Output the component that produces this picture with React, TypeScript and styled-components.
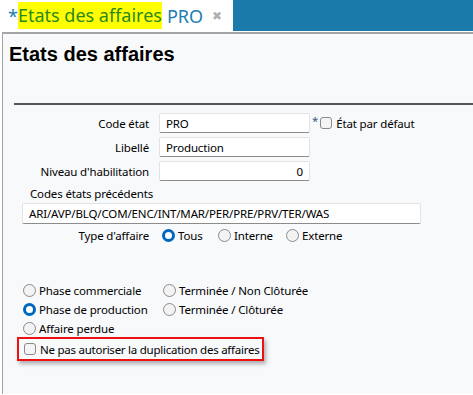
import styled, { createGlobalStyle } from "styled-components"

const GlobalStyle = createGlobalStyle`
  html, body {
    margin: 0;
    padding: 0;
    background: #ffffff;
  }
  body {
    font-family: "Noto Sans", "Open Sans", sans-serif;
    font-size: 11.5px;
    letter-spacing: -0.15px;
    color: #000000;
  }
`

const TabBar = styled.div`
  display: flex;
  height: 31px;
  background: #ffffff;
  border-bottom: 1px solid #ffffff;
`

const Tab = styled.div`
  display: flex;
  align-items: center;
  width: 233px;
  padding-left: 8px;
  box-sizing: border-box;
  font-size: 18px;
  letter-spacing: 0;
  color: #1d7db2;
`

const Highlight = styled.span`
  background: #ffff00;
  color: #2b8a1e;
  padding: 1px 0 2px;
`

const TabName = styled.span`
  margin-left: 5px;
`

const CloseMark = styled.span`
  margin-left: 9px;
  color: #b0b0b0;
  font-family: "DejaVu Sans", sans-serif;
  font-size: 12px;
  font-weight: bold;
`

const TabFill = styled.div`
  flex: 1;
  background: #1a7bab;
`

const Panel = styled.div`
  margin-left: 2px;
  height: 362px;
  border-top: 2px solid #a4a4a4;
  border-left: 1px solid #a4a4a4;
  background: #f8f9fb;
  box-sizing: border-box;
`

const Title = styled.h1`
  margin: 0;
  padding: 9px 0 0 6px;
  font-family: "Liberation Sans", Arial, sans-serif;
  font-size: 20px;
  font-weight: bold;
  letter-spacing: 0;
  line-height: 22px;
`

const Rule = styled.div`
  margin: 38px 0 0 11px;
  height: 2px;
  background: #565656;
`

const Form = styled.div`
  padding: 8px 0 0 16px;
`

const FieldGrid = styled.div`
  display: grid;
  grid-template-columns: 130px 151px auto;
  column-gap: 10px;
  row-gap: 4px;
  align-items: center;
`

const Label = styled.div`
  text-align: right;
  white-space: nowrap;
`

const Box = styled.div<{ $align?: string }>`
  height: 20px;
  box-sizing: border-box;
  padding: 0 6px;
  display: flex;
  align-items: center;
  justify-content: ${(p) => (p.$align === "right" ? "flex-end" : "flex-start")};
  background: #ffffff;
  border: 1px solid #e3e3e3;
  border-bottom-color: #8c8c8c;
  border-radius: 2px;
  white-space: nowrap;
`

const Side = styled.div`
  display: flex;
  align-items: center;
  margin-left: -8px;
  white-space: nowrap;
`

const Star = styled.span`
  color: #3a5a80;
  margin-right: 2px;
  position: relative;
  top: -3px;
`

const Check = styled.span`
  display: inline-block;
  width: 12px;
  height: 12px;
  box-sizing: border-box;
  border: 1px solid #8a8a8a;
  border-radius: 3px;
  background: #f4f4f4;
  margin-right: 4px;
  flex-shrink: 0;
`

const Radio = styled.span<{ $on?: boolean }>`
  display: inline-block;
  width: 13px;
  height: 13px;
  box-sizing: border-box;
  border-radius: 50%;
  flex-shrink: 0;
  margin-right: 3px;
  border: ${(p) => (p.$on ? "3.5px solid #0067c0" : "1px solid #8a8a8a")};
  background: ${(p) => (p.$on ? "#ffffff" : "#f3f3f3")};
`

const Option = styled.label`
  display: inline-flex;
  align-items: center;
  white-space: nowrap;
`

const PrevLabel = styled.div`
  margin: 4px 0 0 11px;
  height: 18px;
  line-height: 18px;
`

const PrevBox = styled(Box)`
  margin: 0 0 0 3px;
  width: 399px;
  height: 21px;
`

const TypeRow = styled.div`
  display: grid;
  grid-template-columns: 130px auto;
  column-gap: 13px;
  align-items: center;
  margin-top: 1px;
  height: 20px;
`

const TypeOptions = styled.div`
  display: flex;
`

const TypeOption = styled(Option)<{ $w: number }>`
  width: ${(p) => p.$w}px;
`

const PhaseGrid = styled.div`
  display: grid;
  grid-template-columns: 140px auto;
  row-gap: 1px;
  margin: 36px 0 0 4px;
`

const PhaseOption = styled(Option)`
  height: 18px;
`

const Alert = styled.div`
  display: flex;
  align-items: center;
  margin: 0 0 0 -2px;
  width: 247px;
  height: 24px;
  box-sizing: border-box;
  padding-left: 5px;
  border: 2px solid #ee1111;
  box-shadow: 2px 3px 4px rgba(0, 0, 0, 0.3);
  white-space: nowrap;
  letter-spacing: -0.25px;
`

export default function App() {
  return (
    <>
      <GlobalStyle />
      <TabBar>
        <Tab>
          *<Highlight>Etats des affaires</Highlight>
          <TabName>PRO</TabName>
          <CloseMark>✖</CloseMark>
        </Tab>
        <TabFill />
      </TabBar>
      <Panel>
        <Title>Etats des affaires</Title>
        <Rule />
        <Form>
          <FieldGrid>
            <Label>Code état</Label>
            <Box>PRO</Box>
            <Side>
              <Star>*</Star>
              <Check />
              État par défaut
            </Side>
            <Label>Libellé</Label>
            <Box>Production</Box>
            <span />
            <Label>Niveau d'habilitation</Label>
            <Box $align="right">0</Box>
            <span />
          </FieldGrid>
          <PrevLabel>Codes états précédents</PrevLabel>
          <PrevBox>ARI/AVP/BLQ/COM/ENC/INT/MAR/PER/PRE/PRV/TER/WAS</PrevBox>
          <TypeRow>
            <Label>Type d'affaire</Label>
            <TypeOptions>
              <TypeOption $w={56}>
                <Radio $on />
                Tous
              </TypeOption>
              <TypeOption $w={68}>
                <Radio />
                Interne
              </TypeOption>
              <TypeOption $w={80}>
                <Radio />
                Externe
              </TypeOption>
            </TypeOptions>
          </TypeRow>
          <PhaseGrid>
            <PhaseOption>
              <Radio />
              Phase commerciale
            </PhaseOption>
            <PhaseOption>
              <Radio />
              Terminée / Non Clôturée
            </PhaseOption>
            <PhaseOption>
              <Radio $on />
              Phase de production
            </PhaseOption>
            <PhaseOption>
              <Radio />
              Terminée / Clôturée
            </PhaseOption>
            <PhaseOption>
              <Radio />
              Affaire perdue
            </PhaseOption>
          </PhaseGrid>
          <Alert>
            <Check />
            Ne pas autoriser la duplication des affaires
          </Alert>
        </Form>
      </Panel>
    </>
  )
}
